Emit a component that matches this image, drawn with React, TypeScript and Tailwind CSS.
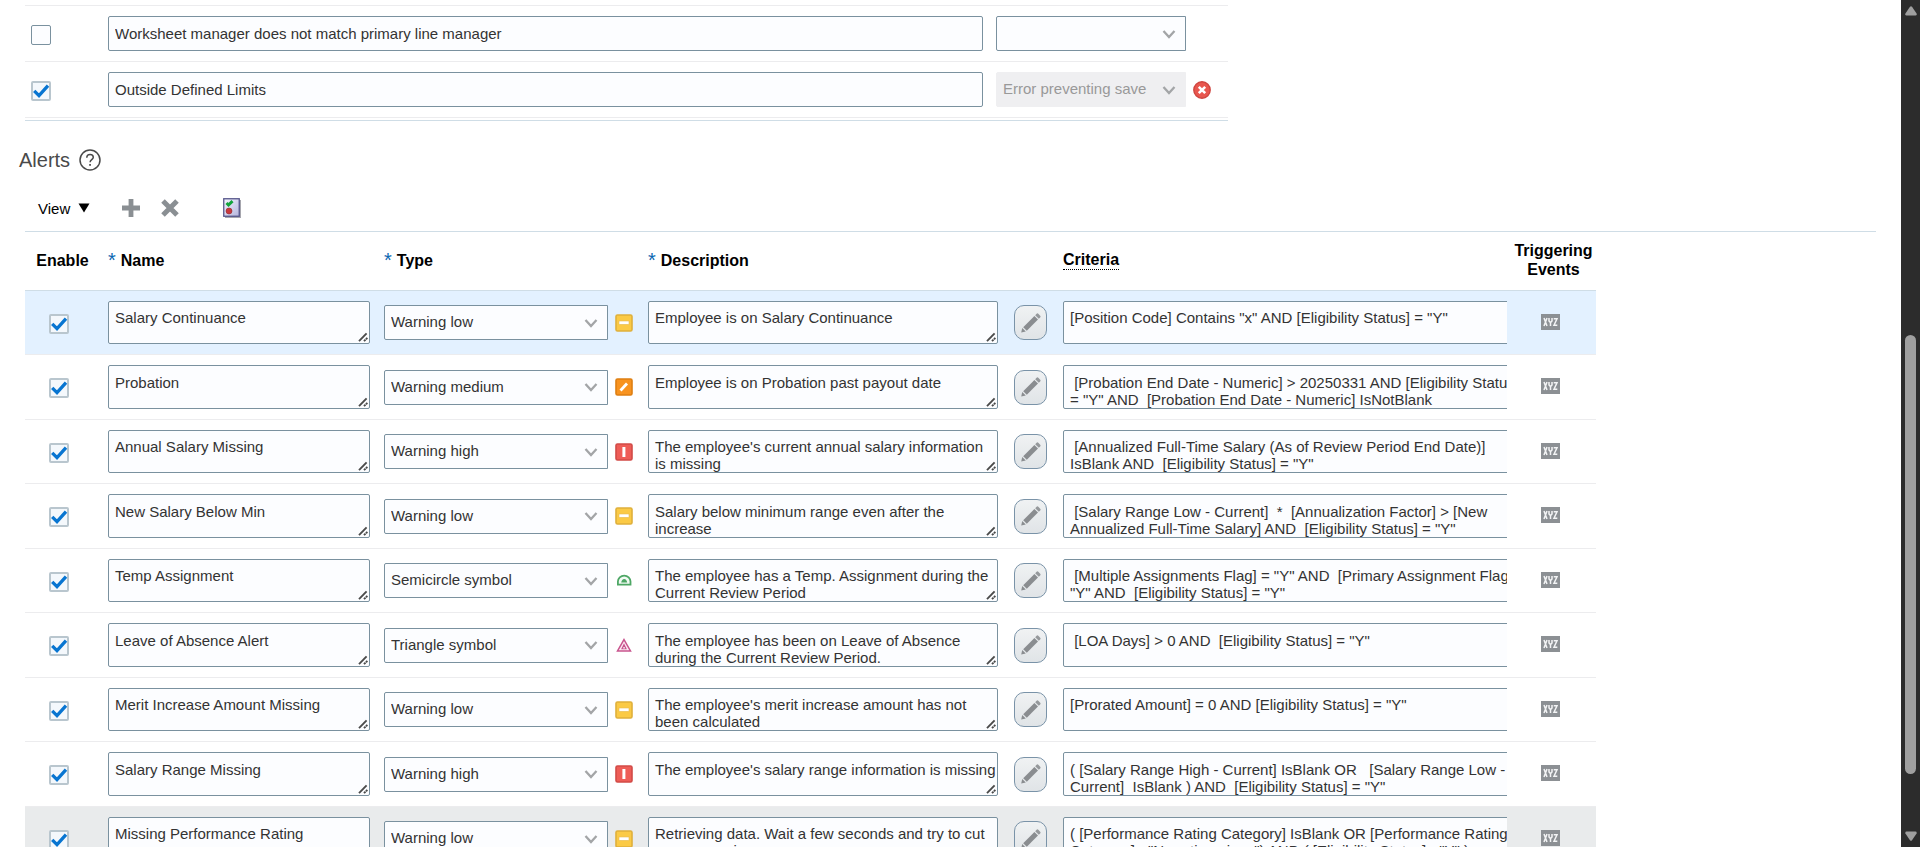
import { useState } from 'react';
import type { ReactNode } from 'react';

type AlertType =
  | 'Warning low'
  | 'Warning medium'
  | 'Warning high'
  | 'Semicircle symbol'
  | 'Triangle symbol';

interface AlertRow {
  name: string;
  type: AlertType;
  description: string;
  criteria: string;
  state?: 'selected' | 'hovered';
}

const ALERT_TYPES: AlertType[] = [
  'Warning low',
  'Warning medium',
  'Warning high',
  'Semicircle symbol',
  'Triangle symbol',
];

const ALERTS: AlertRow[] = [
  {
    name: 'Salary Continuance',
    type: 'Warning low',
    description: 'Employee is on Salary Continuance',
    criteria: '[Position Code] Contains "x" AND [Eligibility Status] = "Y"',
    state: 'selected',
  },
  {
    name: 'Probation',
    type: 'Warning medium',
    description: 'Employee is on Probation past payout date',
    criteria:
      ' [Probation End Date - Numeric] > 20250331 AND [Eligibility Status]\n= "Y" AND  [Probation End Date - Numeric] IsNotBlank',
  },
  {
    name: 'Annual Salary Missing',
    type: 'Warning high',
    description: "The employee's current annual salary information\nis missing",
    criteria:
      ' [Annualized Full-Time Salary (As of Review Period End Date)]\nIsBlank AND  [Eligibility Status] = "Y"',
  },
  {
    name: 'New Salary Below Min',
    type: 'Warning low',
    description: 'Salary below minimum range even after the\nincrease',
    criteria:
      ' [Salary Range Low - Current]  *  [Annualization Factor] > [New\nAnnualized Full-Time Salary] AND  [Eligibility Status] = "Y"',
  },
  {
    name: 'Temp Assignment',
    type: 'Semicircle symbol',
    description: 'The employee has a Temp. Assignment during the\nCurrent Review Period',
    criteria:
      ' [Multiple Assignments Flag] = "Y" AND  [Primary Assignment Flag] =\n"Y" AND  [Eligibility Status] = "Y"',
  },
  {
    name: 'Leave of Absence Alert',
    type: 'Triangle symbol',
    description: 'The employee has been on Leave of Absence\nduring the Current Review Period.',
    criteria: ' [LOA Days] > 0 AND  [Eligibility Status] = "Y"',
  },
  {
    name: 'Merit Increase Amount Missing',
    type: 'Warning low',
    description: "The employee's merit increase amount has not\nbeen calculated",
    criteria: '[Prorated Amount] = 0 AND [Eligibility Status] = "Y"',
  },
  {
    name: 'Salary Range Missing',
    type: 'Warning high',
    description: "The employee's salary range information is missing",
    criteria:
      '( [Salary Range High - Current] IsBlank OR   [Salary Range Low -\nCurrent]  IsBlank ) AND  [Eligibility Status] = "Y"',
  },
  {
    name: 'Missing Performance Rating',
    type: 'Warning low',
    description: 'Retrieving data. Wait a few seconds and try to cut\nor copy again.',
    criteria:
      '( [Performance Rating Category] IsBlank OR [Performance Rating\nCategory] ="No rating given") AND ( [Eligibility Status] ="Y" )',
    state: 'hovered',
  },
];

const ROW_BACKGROUND = {
  none: 'border-[#ececee]',
  selected: 'border-[#ececee] bg-[#e3f1ff]',
  hovered: 'border-[#e9ebec] bg-[#e9ebec]',
};

const FIELD = 'border border-[#7a919f] bg-[#fcfdff] text-[15px] text-[#333333] outline-none';

function CheckBox({ label, initial }: { label: string; initial: boolean }) {
  const [checked, setChecked] = useState(initial);
  return (
    <span className="grid size-5 shrink-0">
      <input
        type="checkbox"
        aria-label={label}
        checked={checked}
        onChange={(event) => setChecked(event.target.checked)}
        className="col-start-1 row-start-1 size-5 appearance-none rounded-[2px] border border-[#7a919f] bg-[#fcfdff] checked:border-2 checked:border-[#b9c6ce] checked:bg-[#f4f8fc]"
      />
      {checked && (
        <svg viewBox="0 0 20 20" className="pointer-events-none col-start-1 row-start-1 size-5">
          <path d="M3.2 9.8 8 14.6 17 4.6" fill="none" stroke="#0875d1" strokeWidth="3.3" />
        </svg>
      )}
    </span>
  );
}

function Select({
  label,
  value,
  options,
  disabled = false,
  className,
}: {
  label: string;
  value: string;
  options: string[];
  disabled?: boolean;
  className: string;
}) {
  const tone = disabled
    ? 'border border-[#efeff1] bg-[#efeff1] text-[15px] text-[#999999] opacity-100'
    : FIELD;
  return (
    <span className={`grid shrink-0 ${className}`}>
      <select
        aria-label={label}
        defaultValue={value}
        disabled={disabled}
        className={`col-start-1 row-start-1 h-[35px] w-full appearance-none rounded-l-[2px] pr-8 pl-[6px] ${tone}`}
      >
        {options.map((option) => (
          <option key={option}>{option}</option>
        ))}
      </select>
      <svg
        viewBox="0 0 14 10"
        className="pointer-events-none col-start-1 row-start-1 mr-[10px] h-[10px] w-[14px] self-center justify-self-end"
      >
        <path d="M1.5 2 7 8 12.5 2" fill="none" stroke="#a3a5a7" strokeWidth="2.3" />
      </svg>
    </span>
  );
}

function ResizeGrip() {
  return (
    <svg
      viewBox="0 0 10 10"
      className="pointer-events-none col-start-1 row-start-1 mr-[2px] mb-[2px] size-[10px] self-end justify-self-end"
    >
      <path d="M1 9.200 8.600 1.400" stroke="#4a4a4a" strokeWidth="1.900" />
      <path d="M6 9.200 9.400 5.800" stroke="#4a4a4a" strokeWidth="1.900" strokeDasharray="2.200 .6" />
    </svg>
  );
}

function TextArea({
  label,
  value,
  tall,
  grip = true,
  className,
}: {
  label: string;
  value: string;
  tall: boolean;
  grip?: boolean;
  className: string;
}) {
  return (
    <span className={`grid ${className}`}>
      <textarea
        aria-label={label}
        defaultValue={value}
        wrap="off"
        className={`col-start-1 row-start-1 block w-full resize-none overflow-hidden rounded-[2px] px-[6px] leading-[17px] whitespace-pre ${FIELD} ${
          tall ? 'h-11 pt-2' : 'h-[43px] pt-[7px]'
        }`}
      />
      {grip && <ResizeGrip />}
    </span>
  );
}

function TypeIcon({ type }: { type: AlertType }) {
  switch (type) {
    case 'Warning low':
      return (
        <svg viewBox="0 0 18 18" className="size-[18px]">
          <rect x="1" y="1" width="16" height="16" rx="1.5" fill="#fbca45" stroke="#dfb03b" strokeWidth="1.6" />
          <rect x="4" y="7" width="10" height="3.4" fill="#fff" stroke="#e6bb52" strokeWidth=".6" />
        </svg>
      );
    case 'Warning medium':
      return (
        <svg viewBox="0 0 18 18" className="size-[18px]">
          <rect x="1" y="1" width="16" height="16" rx="1.5" fill="#f8931f" stroke="#de7f12" strokeWidth="1.6" />
          <path d="M5.5 12.5 12 5.5" stroke="#fff" strokeWidth="2.8" />
        </svg>
      );
    case 'Warning high':
      return (
        <svg viewBox="0 0 18 18" className="size-[18px]">
          <rect x="1" y="1" width="16" height="16" rx="1.5" fill="#ee5d57" stroke="#d24b47" strokeWidth="1.6" />
          <rect x="7.4" y="4" width="3" height="10" fill="#fff" />
        </svg>
      );
    case 'Semicircle symbol':
      return (
        <svg viewBox="0 0 18 18" className="size-[18px]">
          <path d="M2.900 12.600V9.600a6.300 6 0 0 1 12.600 0v3z" fill="#f2faf4" stroke="#4ea765" strokeWidth="1.800" />
          <path d="M6.200 10.600q.6-3.600 3-3.600t3 3.600z" fill="#4ea765" />
        </svg>
      );
    default:
      return (
        <svg viewBox="0 0 18 18" className="size-[18px]">
          <path d="M9 3.600 15.500 15H2.500z" fill="#fbeaf3" stroke="#c9558e" strokeWidth="1.500" />
          <path d="M9 7.200 11.900 13.200H6.100z" fill="#c9558e" />
          <rect x="8.400" y="11" width="1.300" height="1.600" fill="#fff" />
        </svg>
      );
  }
}

function PencilIcon() {
  return (
    <svg viewBox="0 0 24 24" className="size-6">
      <path d="M2.200 21.600 3.200 17 6.800 20.600z" fill="#8a8d90" />
      <path d="M4.200 16.200 15.400 5 19 8.600 7.800 19.800z" fill="#8a8d90" />
      <path d="M16.200 4.200 17.600 2.800a1.200 1.200 0 0 1 1.700 0L21.200 4.700a1.200 1.200 0 0 1 0 1.700L19.800 7.800z" fill="#96999c" />
    </svg>
  );
}

function XyzIcon() {
  return (
    <svg viewBox="0 0 19 16" className="h-4 w-[19px]">
      <rect width="19" height="16" fill="#8c9094" />
      <path
        d="M3 4 6 12M6 4 3 12M8 4V7L9.500 8.600 11 7V4M9.500 8.400V12M12.700 4.700H16L13 11.300H16.300"
        fill="none"
        stroke="#f3f4f5"
        strokeWidth="1.500"
      />
    </svg>
  );
}

function RequiredHeading({ children }: { children: ReactNode }) {
  return (
    <span className="flex gap-[5px]">
      <span className="text-xl leading-[19px] font-normal text-[#0b67b2]">*</span>
      {children}
    </span>
  );
}

function ValidationTable() {
  const rows = [
    { text: 'Worksheet manager does not match primary line manager', enabled: false, action: '' },
    { text: 'Outside Defined Limits', enabled: true, action: 'Error preventing save' },
  ];
  return (
    <div className="ml-[25px] w-[1203px] border-b border-[#cfdde6] pt-[5px] pb-[2px]">
      <table className="w-full table-fixed border-separate border-spacing-0 border-t border-[#ececee]">
        <colgroup>
          <col className="w-[75px]" />
          <col />
          <col className="w-[237px]" />
        </colgroup>
        <tbody>
          {rows.map((row) => (
            <tr key={row.text} className="h-14">
              <td className="border-b border-[#ececee] pt-[2px] pl-[6px]">
                <CheckBox label={`Enable ${row.text}`} initial={row.enabled} />
              </td>
              <td className="border-b border-[#ececee] px-2">
                <input
                  type="text"
                  aria-label="Validation name"
                  defaultValue={row.text}
                  className={`block h-[35px] w-full rounded-[2px] px-[6px] ${FIELD}`}
                />
              </td>
              <td className="border-b border-[#ececee] pl-[5px]">
                <span className="flex items-center gap-[7px]">
                  <Select
                    label="Validation action"
                    value={row.action}
                    options={['', 'Error preventing save']}
                    disabled={row.enabled}
                    className="w-[190px]"
                  />
                  {row.enabled && (
                    <svg viewBox="0 0 18 18" className="size-[18px]" role="img" aria-label="Error">
                      <circle cx="9" cy="9" r="8.2" fill="#e8574f" stroke="#cf4640" strokeWidth="1.4" />
                      <path d="M5.8 5.8 12.2 12.2M12.2 5.8 5.8 12.2" stroke="#fff" strokeWidth="2.6" />
                    </svg>
                  )}
                </span>
              </td>
            </tr>
          ))}
        </tbody>
      </table>
    </div>
  );
}

function Toolbar() {
  return (
    <div className="mr-[25px] ml-[25px] flex h-[45px] items-center border-b border-[#cfdde6] pb-[2px] pl-[13px]">
      <button type="button" className="flex items-center gap-2 text-[15px] leading-[17px] text-black">
        View
        <svg viewBox="0 0 12 10" className="h-[10px] w-3">
          <path d="M.5.5h11L6 9.500z" fill="#000" />
        </svg>
      </button>
      <button type="button" aria-label="Add" className="ml-8">
        <svg viewBox="0 0 18 18" className="size-[18px]">
          <path d="M6.600 0h4.800v6.600H18v4.800h-6.600V18H6.600V11.400H0V6.600H6.600z" fill="#8a8f93" />
        </svg>
      </button>
      <button type="button" aria-label="Delete" className="ml-[21px]">
        <svg viewBox="0 0 18 18" className="size-[18px]">
          <path d="M2 2 16 16M16 2 2 16" stroke="#8a8f93" strokeWidth="5" />
        </svg>
      </button>
      <button type="button" aria-label="Enable alerts" className="ml-11">
        <svg viewBox="0 0 18 20" className="h-5 w-[18px]">
          <defs>
            <linearGradient id="page" x1="0" y1="0" x2="1" y2="1">
              <stop offset="0" stopColor="#f4f4ff" />
              <stop offset="1" stopColor="#b4b4dc" />
            </linearGradient>
          </defs>
          <rect x="2" y="2" width="16" height="18" fill="#a6a6ae" />
          <rect x=".75" y=".75" width="15.500" height="17.500" fill="url(#page)" stroke="#55558a" strokeWidth="1.300" />
          <path d="M3.500 5 5.500 7 9.500 3.200" fill="none" stroke="#12a33c" strokeWidth="3" />
          <circle cx="6" cy="13" r="3" fill="#c8383c" stroke="#8e2a30" strokeWidth=".6" />
        </svg>
      </button>
    </div>
  );
}

function AlertsTable() {
  return (
    <table className="ml-[25px] w-[1571px] table-fixed border-separate border-spacing-0">
      <colgroup>
        <col className="w-[75px]" />
        <col className="w-[276px]" />
        <col className="w-[264px]" />
        <col className="w-[365px]" />
        <col className="w-[50px]" />
        <col className="w-[452px]" />
        <col />
      </colgroup>
      <thead>
        <tr className="h-[59px] text-left text-base leading-[19px] text-black [&>th]:border-b [&>th]:border-[#cfdde6] [&>th]:px-0 [&>th]:pt-0 [&>th]:pb-[2px]">
          <th scope="col" className="text-center">
            Enable
          </th>
          <th scope="col">
            <span className="block pl-2">
              <RequiredHeading>Name</RequiredHeading>
            </span>
          </th>
          <th scope="col">
            <span className="block pl-2">
              <RequiredHeading>Type</RequiredHeading>
            </span>
          </th>
          <th scope="col" colSpan={2}>
            <span className="block pl-2">
              <RequiredHeading>Description</RequiredHeading>
            </span>
          </th>
          <th scope="col">
            <span className="ml-2 inline-block border-b border-dotted border-black leading-[18px]">Criteria</span>
          </th>
          <th scope="col" className="text-center">
            <span className="block pl-1">Triggering Events</span>
          </th>
        </tr>
      </thead>
      <tbody>
        {ALERTS.map((alert, index) => {
          const tall = index % 2 === 1;
          return (
            <tr
              key={alert.name}
              className={`${tall ? 'h-[65px]' : 'h-16'} ${ROW_BACKGROUND[alert.state ?? 'none']} [&>td]:border-b [&>td]:border-inherit`}
            >
              <td className="pt-[2px] pl-6">
                <CheckBox label={`Enable ${alert.name}`} initial />
              </td>
              <td className="pl-2">
                <TextArea label="Name" value={alert.name} tall={tall} className="w-[262px]" />
              </td>
              <td className="pl-2">
                <span className="flex items-center gap-[7px]">
                  <Select label="Type" value={alert.type} options={ALERT_TYPES} className="w-[224px]" />
                  <TypeIcon type={alert.type} />
                </span>
              </td>
              <td className="pl-2">
                <TextArea label="Description" value={alert.description} tall={tall} className="w-[350px]" />
              </td>
              <td className="pl-[9px]">
                <button
                  type="button"
                  aria-label={`Edit criteria for ${alert.name}`}
                  className="flex h-[35px] w-[33px] items-center justify-center rounded-[10px] border border-[#7a93a8] bg-linear-to-b from-[#f0f2f3] to-[#e0e4e7]"
                >
                  <PencilIcon />
                </button>
              </td>
              <td className="pl-2">
                <span className="block overflow-hidden">
                  <TextArea label="Criteria" value={alert.criteria} tall={tall} grip={false} className="w-[490px]" />
                </span>
              </td>
              <td className="pb-[2px]">
                <button
                  type="button"
                  aria-label={`Triggering events for ${alert.name}`}
                  className="mx-auto block pr-[2px]"
                >
                  <XyzIcon />
                </button>
              </td>
            </tr>
          );
        })}
      </tbody>
    </table>
  );
}

function ScrollBar() {
  return (
    <div className="flex w-[19px] shrink-0 flex-col items-center bg-[#2c2c2c] py-[6px]">
      <svg viewBox="0 0 12 10" className="h-[10px] w-3">
        <path d="M5 .8a1.300 1.300 0 0 1 2 0L11.600 7.500Q12 9.500 10.500 9.500H1.500Q0 9.500.4 7.500z" fill="#9f9f9f" />
      </svg>
      <div className="flex w-[11px] flex-1 flex-col">
        <div className="flex-[319]" />
        <div className="flex-[439] rounded-full bg-[#9f9f9f]" />
        <div className="flex-[57]" />
      </div>
      <svg viewBox="0 0 12 10" className="h-[10px] w-3">
        <path d="M5 9.200a1.300 1.300 0 0 0 2 0L11.600 2.500Q12 .5 10.500 .5H1.500Q0 .5 .4 2.500z" fill="#9f9f9f" />
      </svg>
    </div>
  );
}

export default function App() {
  return (
    <div className="flex h-screen overflow-hidden bg-white font-['Liberation_Sans',Arial,sans-serif] text-[#333333]">
      <main className="min-w-0 flex-1 overflow-hidden">
        <ValidationTable />
        <div className="mt-[27px] flex items-center gap-[9px] pl-[19px]">
          <h2 className="text-xl leading-6 text-[#4a4a4a]">Alerts</h2>
          <button type="button" aria-label="Help">
            <svg viewBox="0 0 22 22" className="size-[22px]">
              <circle cx="11" cy="11" r="10" fill="none" stroke="#4a4a4a" strokeWidth="1.500" />
              <path
                d="M7.800 8.700c0-2 1.400-3.200 3.300-3.200s3.200 1.100 3.200 2.800c0 2.300-3.200 2.500-3.200 5"
                fill="none"
                stroke="#4a4a4a"
                strokeWidth="1.500"
              />
              <rect x="10.200" y="15" width="1.700" height="1.800" fill="#4a4a4a" />
            </svg>
          </button>
        </div>
        <div className="pt-[15px]">
          <Toolbar />
          <AlertsTable />
        </div>
      </main>
      <ScrollBar />
    </div>
  );
}
